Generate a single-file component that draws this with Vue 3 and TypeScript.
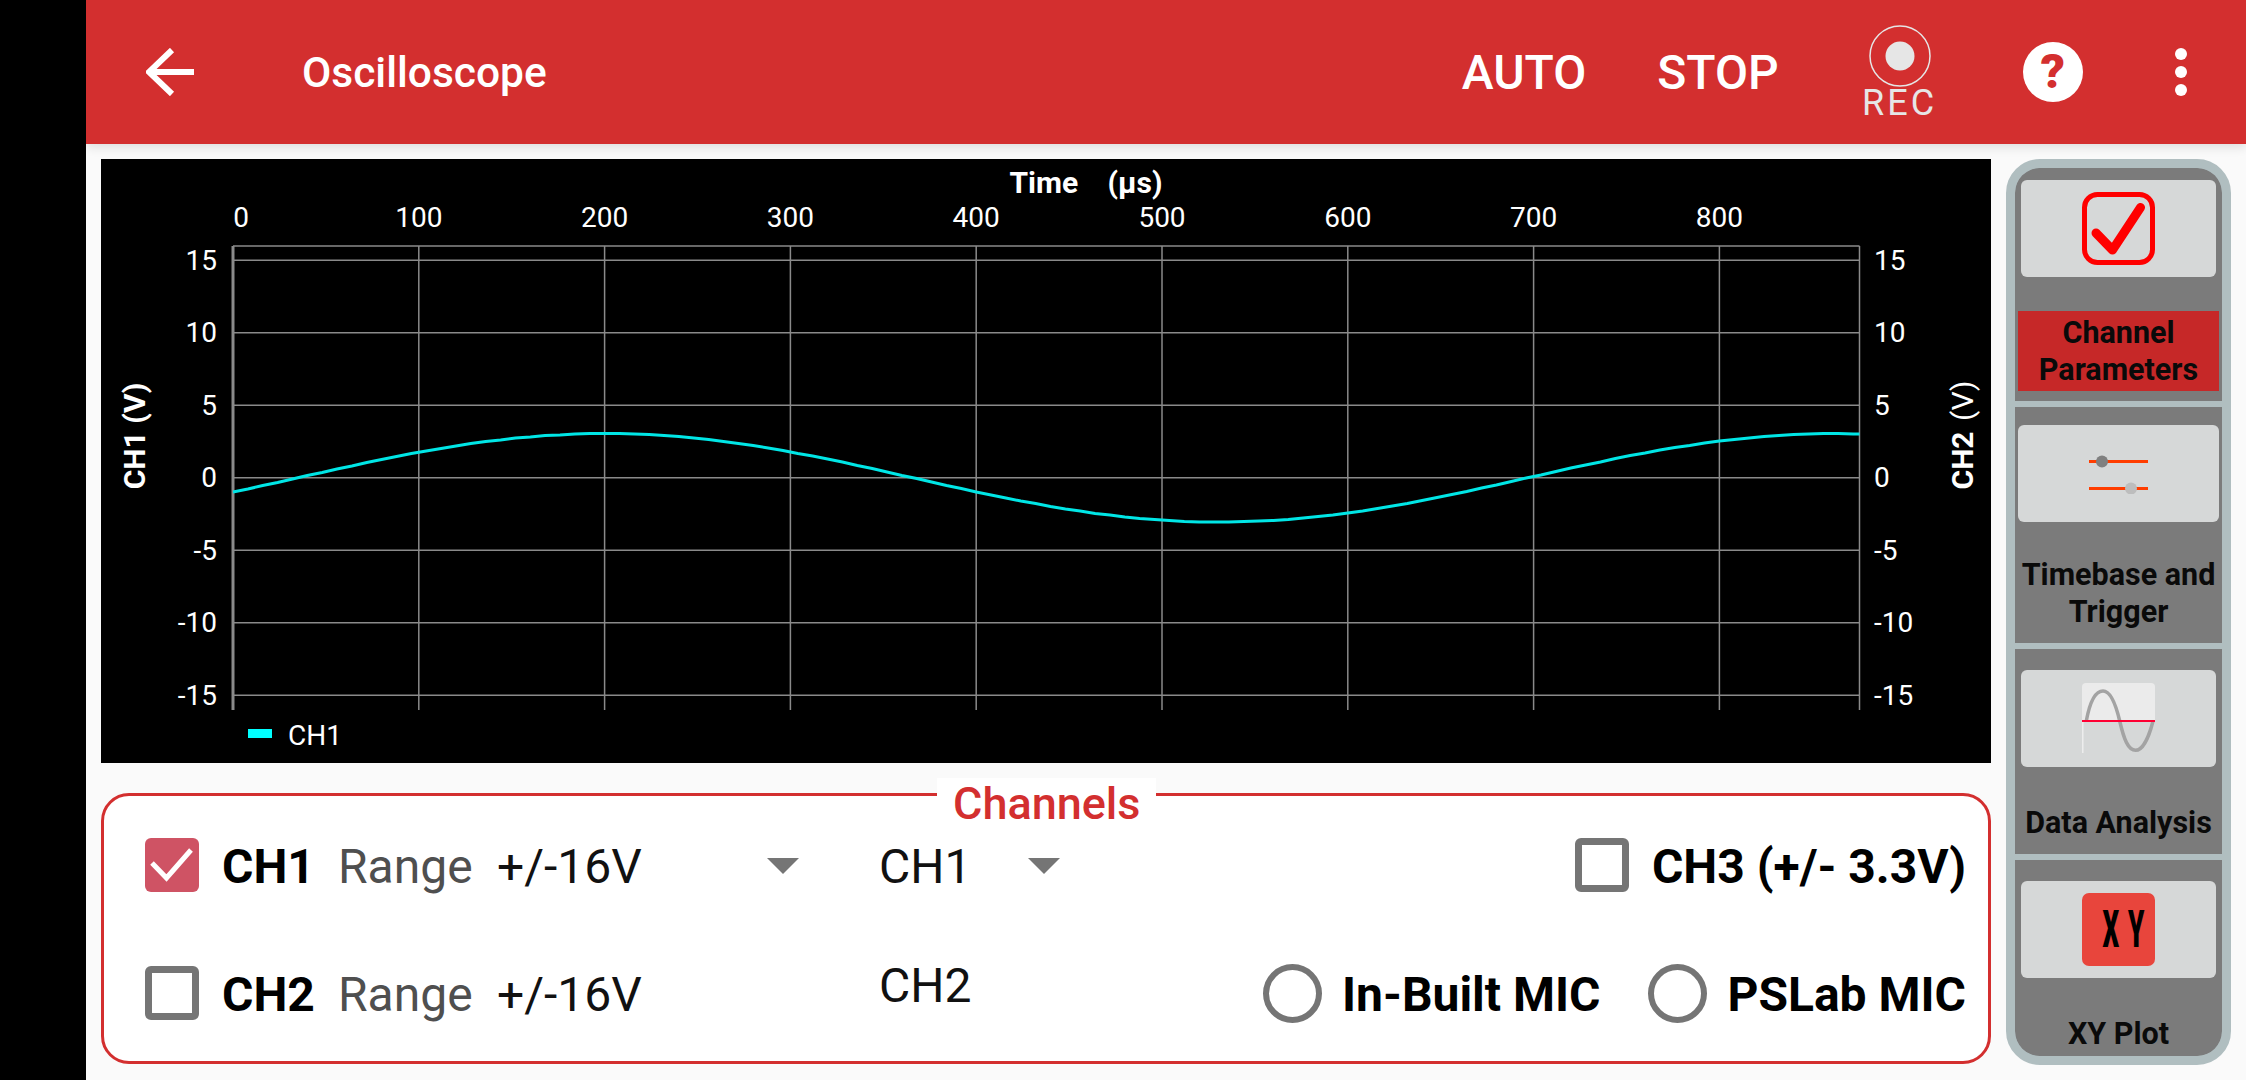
<template>
  <div class="device">
    <div class="notch"></div>
    <div class="screen">
      <header class="topbar">
        <svg class="back" width="48" height="48" viewBox="0 0 48 48">
          <path d="M48 24H4M26 2L3 24l23 22" fill="none" stroke="#fff" stroke-width="6" />
        </svg>
        <span class="title">Oscilloscope</span>
        <span class="action auto">AUTO</span>
        <span class="action stop">STOP</span>
        <div class="rec">
          <svg width="62" height="62" viewBox="0 0 62 62">
            <circle cx="31" cy="31" r="30" fill="none" stroke="#e6e6e6" stroke-width="1.5" />
            <circle cx="31" cy="31" r="14.5" fill="#e6e6e6" />
          </svg>
          <span>REC</span>
        </div>
        <div class="help">?</div>
        <div class="dots"><i></i><i></i><i></i></div>
      </header>

      <main class="content">
        <div class="left">
          <svg class="chart" width="1890" height="604" viewBox="0 0 1890 604">
            <line v-for="v in yTicks" :key="'h' + v" :x1="plotLeft" :x2="plotRight" :y1="yOf(v)" :y2="yOf(v)" class="grid" />
            <line v-for="t in xTicks" :key="'v' + t" :x1="xOf(t)" :x2="xOf(t)" :y1="plotTop" :y2="plotBottom" class="grid" />
            <line :x1="plotLeft" :x2="plotRight" :y1="plotTop" :y2="plotTop" class="grid" />
            <line :x1="plotRight" :x2="plotRight" :y1="plotTop" :y2="plotBottom" class="grid" />
            <line :x1="plotLeft" :x2="plotLeft" :y1="plotTop" :y2="plotBottom" class="axis" />
            <polyline :points="curve" class="curve" />

            <text x="985" y="34" text-anchor="middle" class="bold">Time <tspan dx="22">(µs)</tspan></text>
            <text v-for="t in xTicks" :key="'xl' + t" :x="t === 0 ? 140 : xOf(t)" y="68" text-anchor="middle" class="tick">{{ t }}</text>
            <text v-for="v in yTicks" :key="'yl' + v" x="116" :y="yOf(v) + 9.5" text-anchor="end" class="tick">{{ v }}</text>
            <text v-for="v in yTicks" :key="'yr' + v" x="1773" :y="yOf(v) + 9.5" class="tick">{{ v }}</text>

            <text transform="translate(44 277) rotate(-90)" text-anchor="middle" class="bold">CH1 (V)</text>
            <text transform="translate(1872 276) rotate(-90)" text-anchor="middle" class="bold">CH2 <tspan class="thin" dx="3">(V)</tspan></text>

            <rect x="147" y="570" width="24" height="9" fill="#00ffff" />
            <text x="187" y="586" class="tick">CH1</text>
          </svg>

          <section class="channels">
            <span class="legend">Channels</span>
            <div class="row">
              <div class="check on">
                <svg width="54" height="54" viewBox="0 0 54 54">
                  <path d="M7 25l14.500 15L46 12" fill="none" stroke="#fff" stroke-width="5" />
                </svg>
              </div>
              <span class="name">CH1</span>
              <span class="range">Range</span>
              <span class="value">+/-16V</span>
              <span class="arrow"></span>
              <span class="value">CH1</span>
              <span class="arrow"></span>
              <div class="extra wide-gap">
                <div class="check"></div>
                <span class="name">CH3 (+/- 3.3V)</span>
              </div>
            </div>
            <div class="row">
              <div class="check"></div>
              <span class="name">CH2</span>
              <span class="range">Range</span>
              <span class="value">+/-16V</span>
              <span></span>
              <span class="value raised">CH2</span>
              <span></span>
              <div class="extra">
                <div class="radio"></div>
                <span class="name">In-Built MIC</span>
                <div class="radio second-radio"></div>
                <span class="name">PSLab MIC</span>
              </div>
            </div>
          </section>
        </div>

        <aside class="panel">
          <div class="tab tab1">
            <div class="card">
              <svg width="73" height="73" viewBox="0 0 73 73">
                <rect x="2.500" y="2.500" width="68" height="68" rx="13" fill="none" stroke="#ff0000" stroke-width="5" />
                <path d="M14 41l16.500 17L58.500 15.500" fill="none" stroke="#ff0000" stroke-width="9" stroke-linejoin="round" stroke-linecap="round" />
              </svg>
            </div>
            <div class="label active">Channel<br />Parameters</div>
          </div>
          <div class="tab tab2">
            <div class="card wide">
              <svg width="60" height="41" viewBox="0 0 60 41">
                <path d="M0 8.500h59M0 35.500h59" stroke="#ff3d00" stroke-width="3" />
                <circle cx="13" cy="8.500" r="6" fill="#808080" />
                <circle cx="42" cy="35.500" r="6" fill="#bdbdbd" />
              </svg>
            </div>
            <div class="label">Timebase and<br />Trigger</div>
          </div>
          <div class="tab tab3">
            <div class="card">
              <svg width="73" height="71" viewBox="0 0 73 71">
                <path d="M0 38V4a4 4 0 0 1 4-4h65a4 4 0 0 1 4 4v34z" fill="#ebebeb" />
                <rect x="0" y="38" width="1.500" height="32" fill="#ededed" />
                <path d="M4.300 38C8 18 14 8 21 8s12.500 12 16.700 30S46 67.300 53.700 67.300 67.500 52 71 38" fill="none" stroke="#a3a3a3" stroke-width="3.500" />
                <rect x="0" y="37" width="73" height="2" fill="#ff0033" />
              </svg>
            </div>
            <div class="label">Data Analysis</div>
          </div>
          <div class="tab tab4">
            <div class="card">
              <div class="xy"><span>XY</span></div>
            </div>
            <div class="label">XY Plot</div>
          </div>
        </aside>
      </main>
    </div>
  </div>
</template>

<script setup lang="ts">
const plotLeft = 132
const plotRight = 1758.5
const plotTop = 87
const plotBottom = 551

const xTicks = [0, 100, 200, 300, 400, 500, 600, 700, 800]
const yTicks = [15, 10, 5, 0, -5, -10, -15]

const xOf = (t: number) => plotLeft + t * 1.858
const yOf = (v: number) => 318.8 - v * 14.5

/** the captured wave, stepped a little like the sampled trace */
const curve = Array.from({ length: 111 }, (_, i) => {
  const t = i * 8
  const v = 3.05 * Math.sin((2 * Math.PI * (t - 35)) / 662)
  return `${Math.min(xOf(t), plotRight).toFixed(1)},${(Math.round(yOf(v) * 2) / 2).toFixed(1)}`
}).join(' ')
</script>

<style>
html,
body {
  margin: 0;
  background: #000;
}
</style>

<style scoped>
.device {
  width: 2246px;
  height: 1080px;
  display: flex;
  overflow: hidden;
  font-family: Roboto, 'Liberation Sans', sans-serif;
}

.notch {
  width: 86px;
  background: #000;
}

.screen {
  flex: 1;
  display: flex;
  flex-direction: column;
  background: #fafafa;
}

.topbar {
  height: 144px;
  flex-shrink: 0;
  display: flex;
  align-items: center;
  background: #d32f2f;
  color: #fff;
  box-shadow: 0 3px 10px rgba(0, 0, 0, 0.12);
  position: relative;
}

.back {
  margin-left: 60px;
}

.title {
  margin-left: 108px;
  font-size: 42.5px;
  font-weight: 500;
}

.action {
  font-size: 48px;
  font-weight: 500;
}

.auto {
  margin-left: 915px;
}

.stop {
  margin-left: 71px;
}

.rec {
  margin-left: 85px;
  width: 72px;
  display: flex;
  flex-direction: column;
  align-items: center;
  color: #e6e6e6;
  font-size: 36px;
  letter-spacing: 3px;
  line-height: 33px;
}

.help {
  margin-left: 87px;
  width: 60px;
  height: 60px;
  border-radius: 50%;
  background: #fff;
  color: #d32f2f;
  font-size: 48px;
  font-weight: 900;
  line-height: 60px;
  text-align: center;
}

.dots {
  margin-left: 92px;
  display: flex;
  flex-direction: column;
  gap: 6px;
}

.dots i {
  width: 12px;
  height: 12px;
  border-radius: 50%;
  background: #fff;
}

.content {
  flex: 1;
  display: flex;
  padding: 15px;
  gap: 15px;
}

.left {
  width: 1890px;
  display: flex;
  flex-direction: column;
  gap: 30px;
}

.chart {
  display: block;
  background: #000;
}

.grid {
  stroke: #8a8a8a;
  stroke-width: 1.5;
}

.axis {
  stroke: #8a8a8a;
  stroke-width: 3;
}

.curve {
  fill: none;
  stroke: #00e6e6;
  stroke-width: 3;
}

.tick {
  fill: #fff;
  font-size: 28px;
}

.bold {
  fill: #fff;
  font-size: 30px;
  font-weight: 700;
}

.thin {
  font-weight: 400;
}

.channels {
  position: relative;
  height: 271px;
  box-sizing: border-box;
  padding: 5px 22px 0 41px;
  border: 3px solid #d32f2f;
  border-radius: 28px;
  background: #fff;
}

.legend {
  position: absolute;
  left: 833px;
  top: -18px;
  height: 50px;
  padding: 0 16px;
  background: #fff;
  color: #d32f2f;
  font-size: 45px;
  font-weight: 500;
  line-height: 52px;
}

.row {
  height: 128px;
  display: grid;
  grid-template-columns: 54px 139px 159px 270px 112px 149px 30px 1fr;
  align-items: center;
  font-size: 48px;
  line-height: 56px;
}

.row > .name {
  padding-left: 23px;
}

.check {
  width: 54px;
  height: 54px;
  box-sizing: border-box;
  border: 7px solid #757575;
  border-radius: 6px;
  flex-shrink: 0;
}

.check.on {
  border: 0;
  background: #cf5364;
}

.check.on svg {
  display: block;
}

.radio {
  width: 59px;
  height: 59px;
  box-sizing: border-box;
  border: 6px solid #757575;
  border-radius: 50%;
  flex-shrink: 0;
}

.second-radio {
  margin-left: 28px;
}

.name {
  color: #000;
  font-weight: 700;
  white-space: nowrap;
  margin-top: 3px;
}

.range {
  color: #4f4f4f;
  margin-top: 3px;
}

.value {
  color: #111;
  white-space: nowrap;
  margin-top: 3px;
}

.raised {
  margin-top: 0;
  margin-bottom: 14px;
}

.arrow {
  width: 0;
  height: 0;
  border-left: 16px solid transparent;
  border-right: 16px solid transparent;
  border-top: 16px solid #757575;
  margin-top: 2px;
}

.extra {
  display: flex;
  align-items: center;
  justify-content: flex-end;
  gap: 20px;
}

.extra.wide-gap {
  gap: 23px;
}

.panel {
  width: 225px;
  height: 906px;
  box-sizing: border-box;
  display: flex;
  flex-direction: column;
  gap: 6px;
  border: 9px solid #b0bec0;
  border-radius: 34px;
  background: #b0bec0;
  overflow: hidden;
}

.tab {
  background: #7b7b7b;
  display: flex;
  flex-direction: column;
  align-items: center;
  box-sizing: border-box;
}

.tab1 {
  height: 233px;
  padding-top: 12px;
  border-radius: 24px 24px 0 0;
}

.tab2 {
  height: 236px;
  padding-top: 18px;
}

.tab3 {
  height: 205px;
  padding-top: 21px;
}

.tab4 {
  height: 196px;
  padding-top: 21px;
  border-radius: 0 0 24px 24px;
}

.card {
  width: 195px;
  height: 97px;
  border-radius: 6px;
  background: #d6d8d8;
  display: flex;
  align-items: center;
  justify-content: center;
}

.card.wide {
  width: 201px;
}

.label {
  width: 201px;
  text-align: center;
  color: #0a0a0a;
  font-size: 30.5px;
  font-weight: 700;
  line-height: 37px;
  white-space: nowrap;
}

.label.active {
  margin-top: 34px;
  padding: 3px 0;
  background: #c62828;
}

.tab2 .label {
  margin-top: 34px;
}

.tab3 .label,
.tab4 .label {
  margin-top: 37px;
}

.xy {
  width: 73px;
  height: 73px;
  border-radius: 7px;
  background: #e8453c;
  display: flex;
  align-items: center;
  justify-content: center;
  overflow: hidden;
}

.xy span {
  color: #000;
  font-size: 52px;
  font-weight: 900;
  letter-spacing: 18px;
  margin-right: -18px;
  transform: scaleX(0.5);
}
</style>
